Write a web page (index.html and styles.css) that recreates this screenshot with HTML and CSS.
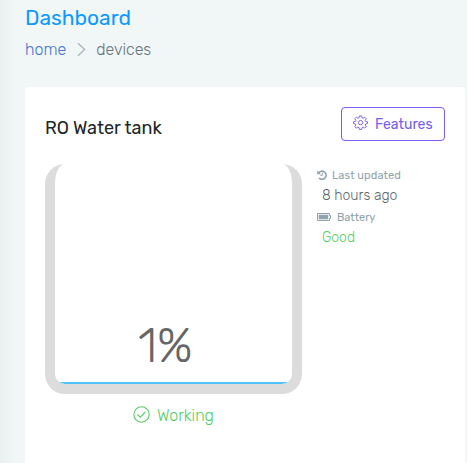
FILE: index.html
```html
<!DOCTYPE html>
<html lang="en">
<head>
    <meta charset="UTF-8">
    <meta name="viewport" content="width=device-width, initial-scale=1.0">
    <title>Dashboard</title>
    <link rel="stylesheet" href="styles.css">
</head>
<body>

    <header class="page-header">
        <h1>Dashboard</h1>
        <nav class="breadcrumb">
            <a href="#">home</a>
            <svg class="chevron" width="9" height="15" viewBox="0 0 9 15"><path d="M1 1.2 7.6 7.5 1 13.8" fill="none" stroke="#a9b4b8" stroke-width="1.3"/></svg>
            <span>devices</span>
        </nav>
    </header>

    <div class="card">
        <div class="card-header">
            <h2>RO Water tank</h2>
            <button class="btn-features">
                <svg width="15" height="15" viewBox="0 0 16 16" fill="none" stroke="#7460ee" stroke-width="1" stroke-linejoin="round">
                    <path d="M6.8 1h2.4l.4 2 1.2.5 1.7-1.2 1.6 1.7-1.1 1.7.5 1.2 2 .3v1.9l-2 .4-.5 1.2 1.1 1.7-1.6 1.6-1.7-1.1-1.2.5-.4 2H6.8l-.4-2-1.2-.5-1.7 1.1-1.6-1.6L3 10.7l-.5-1.2-2-.4V7.2l2-.3L3 5.7 1.9 4l1.6-1.7 1.7 1.2L6.4 3z"/>
                    <circle cx="8" cy="8.1" r="2.3"/>
                </svg>
                <span>Features</span>
            </button>
        </div>

        <div class="card-body">
            <div class="tank-column">
                <div class="tank">
                    <span class="level">1%</span>
                    <div class="water"></div>
                </div>
                <div class="status">
                    <svg width="17" height="17" viewBox="0 0 17 17" fill="none" stroke="#55ce63" stroke-width="1.1">
                        <circle cx="8.5" cy="8.5" r="7.7"/>
                        <path d="M4.5 8.5 7.3 11.2 12.4 5.8"/>
                    </svg>
                    <span>Working</span>
                </div>
            </div>

            <div class="info">
                <div class="label">
                    <svg width="10" height="10" viewBox="0 0 10 10" fill="none" stroke="#90a4ae">
                        <path d="M1.6 3A4.1 4.1 0 1 1 2 8" stroke-width="1.6"/>
                        <path d="M.2.4V4.2H4z" fill="#90a4ae" stroke="none"/>
                        <path d="M5.3 2.8V5.4H3.4" stroke-width="1"/>
                    </svg>
                    <span class="updated">Last updated</span>
                </div>
                <div class="value time">8 hours ago</div>
                <div class="label battery">
                    <svg width="14" height="8" viewBox="0 0 14 8">
                        <path d="M.5.5H12.5V2.5H13.5V5.5H12.5V7.5H.5z" fill="none" stroke="#90a4ae"/>
                        <path d="M1.7 1.7H11.3V6.3H1.7z" fill="#90a4ae"/>
                    </svg>
                    <span>Battery</span>
                </div>
                <div class="value good">Good</div>
            </div>
        </div>
    </div>

</body>
</html>
```
FILE: styles.css
```css
body {
    font-family: Rubik, Roboto, "Liberation Sans", sans-serif;
    font-weight: 300;
    font-size: 16px;
    color: #67757c;
    margin: 0;
    background: linear-gradient(to right, #eaf0f0 0, #f1f6f7 15px) #f1f6f7;
}

.page-header {
    padding: 5px 0 0 25px;
    height: 82px;
}

h1 {
    margin: 0;
    font-size: 21px;
    line-height: 26px;
    font-weight: 400;
    color: #0d99ff;
}

.breadcrumb {
    display: flex;
    align-items: center;
    margin-top: 8px;
    height: 20px;
}

.breadcrumb a {
    color: #4272d7;
    text-decoration: none;
}

.chevron {
    margin: 0 10px 0 11px;
}

.card {
    box-sizing: border-box;
    background-color: white;
    border-radius: 4px 4px 0 0;
    width: 440px;
    height: 376px;
    margin-left: 25px;
    padding: 20px;
}

.card-header {
    display: flex;
    justify-content: space-between;
    height: 57px;
}

h2 {
    margin: 10px 0 0;
    font-size: 18px;
    line-height: 22px;
    font-weight: 400;
    color: #212529;
}

.btn-features {
    display: flex;
    align-items: center;
    gap: 7px;
    width: 104px;
    height: 34px;
    padding: 0 0 0 11px;
    border: 1px solid #7460ee;
    border-radius: 4px;
    background-color: white;
    color: #7460ee;
    font-family: inherit;
    font-size: 14px;
    font-weight: 400;
}

.btn-features svg {
    margin-top: -4px;
}

.card-body {
    display: flex;
    gap: 15px;
}

.tank {
    box-sizing: border-box;
    width: 257px;
    height: 230px;
    border: 10px solid #dcdcdc;
    border-top: 0;
    border-radius: 20px;
    overflow: hidden;
    display: flex;
    flex-direction: column;
    justify-content: flex-end;
}

.level {
    font-size: 48px;
    line-height: 56px;
    padding-left: 83px;
    margin-bottom: 8px;
    color: #666;
}

.water {
    height: 2px;
    background-color: #4fc3f7;
}

.status {
    display: flex;
    align-items: center;
    justify-content: center;
    gap: 7px;
    height: 20px;
    margin-top: 11px;
    color: #55ce63;
}

.status svg {
    margin-top: -2px;
}

.info {
    padding-top: 3px;
}

.label {
    display: flex;
    align-items: center;
    gap: 5px;
    height: 16px;
    font-size: 11px;
    font-weight: 400;
    color: #90a4ae;
}

.updated {
    letter-spacing: 0.1px;
}

.label.battery {
    gap: 6px;
}

.value {
    padding-left: 5px;
    height: 26px;
    line-height: 25px;
    font-size: 14px;
}

.time {
    color: #5c6670;
}

.good {
    color: #55ce63;
}
```
